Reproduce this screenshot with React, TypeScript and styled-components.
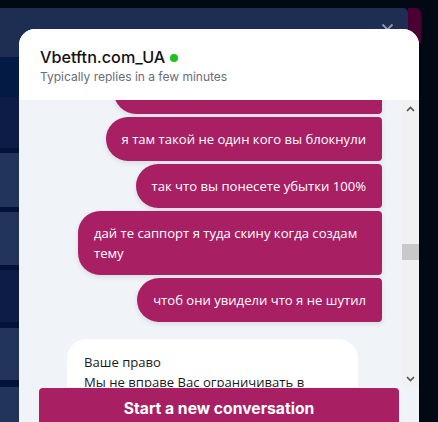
import React, { useEffect, useRef } from "react";
import styled, { createGlobalStyle } from "styled-components";

const Global = createGlobalStyle`
  html, body { margin: 0; padding: 0; background: #020814; }
  * { box-sizing: border-box; }
`;

const Scene = styled.div`
  position: relative;
  width: 438px;
  height: 422px;
  overflow: hidden;
  background: #020814;
`;

const Site = styled.div`
  display: flex;
  align-items: flex-start;
  padding-top: 8px;
  height: 100%;
`;

const SitePanel = styled.div`
  width: 408px;
  display: flex;
  flex-direction: column;
`;

const SiteHeader = styled.div`
  height: 49px;
  background: #1d2e52;
  border-radius: 0 5px 0 0;
  display: flex;
  justify-content: flex-end;
  align-items: flex-start;
  padding: 15px 14px 0 0;
  color: #8c9ab3;
`;

const tones: Record<string, string> = {
  deep: "#031a45",
  mid: "#0c1c46",
  light: "#22345a",
  sep: "#021238",
};

const SiteRow = styled.div<{ $h: number; $tone: string }>`
  height: ${(p) => p.$h}px;
  flex: none;
  background: ${(p) => tones[p.$tone]};
`;

const SideTab = styled.div`
  width: 13px;
  height: 35px;
  background: #4a0031;
  border-radius: 0 5px 0 0;
`;

const Widget = styled.div`
  position: absolute;
  left: 19px;
  top: 29px;
  width: 400px;
  height: 420px;
  background: #f0f4f8;
  border-radius: 16px 16px 0 0;
  overflow: hidden;
  display: flex;
  flex-direction: column;
  font-family: "Open Sans", "Noto Sans", sans-serif;
`;

const Header = styled.div`
  height: 71px;
  flex: none;
  background: #ffffff;
  padding: 18px 21px 0 21px;
  display: flex;
  flex-direction: column;
`;

const TitleRow = styled.div`
  display: flex;
  align-items: center;
  gap: 5px;
`;

const Title = styled.span`
  font-family: Inter, "Noto Sans", sans-serif;
  font-size: 16.2px;
  font-weight: 500;
  color: #121212;
  line-height: 21px;
`;

const OnlineDot = styled.span`
  width: 8px;
  height: 8px;
  border-radius: 50%;
  background: #1dc120;
  margin-top: 1px;
`;

const Subtitle = styled.span`
  font-family: Inter, "Noto Sans", sans-serif;
  font-size: 12px;
  color: #6a6b7a;
  line-height: 16px;
  margin-top: 1px;
`;

const ChatRow = styled.div`
  display: flex;
  height: 287px;
  flex: none;
`;

const MessageList = styled.div`
  position: relative;
  flex: 1;
  overflow: hidden;
  display: flex;
  flex-direction: column;
  align-items: flex-end;
  padding: 16px 20px 24px 48px;
`;

const Bubble = styled.div<{ $gap?: number }>`
  flex: none;
  background: #a91f64;
  color: #ffffff;
  font-size: 13.1px;
  line-height: 20px;
  padding: 12px 16px;
  border-radius: 22px 4px 4px 22px;
  max-width: 304px;
  min-height: 44px;
  margin-top: ${(p) => p.$gap ?? 3}px;
  box-shadow: 0 2px 5px rgba(30, 40, 60, 0.12);
`;

const OperatorCard = styled.div`
  flex: none;
  align-self: flex-start;
  width: 291px;
  margin-top: 17px;
  background: #ffffff;
  color: #1a1a1a;
  font-size: 13.1px;
  line-height: 20px;
  padding: 13px 17px;
  border-radius: 20px;
`;

const Line = styled.div``;

const Scrollbar = styled.div`
  width: 17px;
  flex: none;
  background: #f1f1f1;
  display: flex;
  flex-direction: column;
  align-items: center;
  color: #505050;
`;

const ScrollArrow = styled.div`
  height: 17px;
  display: flex;
  align-items: center;
  justify-content: center;
`;

const Track = styled.div`
  flex: 1;
  width: 100%;
  display: flex;
  flex-direction: column;
`;

const Thumb = styled.div`
  width: 100%;
  height: 16px;
  margin-top: 127px;
  background: #c9c9c9;
`;

const Footer = styled.div`
  padding: 1px 20px 0 20px;
`;

const StartButton = styled.button`
  width: 100%;
  height: 40px;
  border: none;
  border-radius: 4px 4px 0 0;
  background: #a91f64;
  color: #ffffff;
  font-family: Inter, "Noto Sans", sans-serif;
  font-size: 15.7px;
  font-weight: 700;
  cursor: pointer;
`;

const Chevron = ({ up }: { up?: boolean }) => (
  <svg width="9" height="6" viewBox="0 0 9 6">
    <path
      d={up ? "M1 5 L4.5 1.5 L8 5" : "M1 1 L4.5 4.5 L8 1"}
      fill="none"
      stroke="currentColor"
      strokeWidth="1.6"
    />
  </svg>
);

const CloseIcon = () => (
  <svg width="13" height="13" viewBox="0 0 13 13">
    <path d="M1.5 1.5 L11.5 11.5 M11.5 1.5 L1.5 11.5" stroke="currentColor" strokeWidth="1.8" fill="none" />
  </svg>
);

const rows: [number, string][] = [
  [40, "deep"],
  [51, "mid"],
  [5, "sep"],
  [54, "light"],
  [5, "sep"],
  [53, "light"],
  [5, "sep"],
  [52, "mid"],
  [6, "sep"],
  [52, "light"],
  [7, "sep"],
  [40, "light"],
];

const messages = [
  "я там такой не один кого вы блокнули",
  "так что вы понесете убытки 100%",
  "дай те саппорт я туда скину когда создам тему",
  "чтоб они увидели что я не шутил",
];

export default function App() {
  const listRef = useRef<HTMLDivElement>(null);
  const anchorRef = useRef<HTMLDivElement>(null);

  useEffect(() => {
    if (listRef.current && anchorRef.current) {
      listRef.current.scrollTop = anchorRef.current.offsetTop - 17;
    }
  }, []);

  return (
    <>
      <Global />
      <Scene>
        <Site>
          <SitePanel>
            <SiteHeader>
              <CloseIcon />
            </SiteHeader>
            {rows.map(([h, tone], i) => (
              <SiteRow key={i} $h={h} $tone={tone} />
            ))}
          </SitePanel>
          <SideTab />
        </Site>
        <Widget>
          <Header>
            <TitleRow>
              <Title>Vbetftn.com_UA</Title>
              <OnlineDot />
            </TitleRow>
            <Subtitle>Typically replies in a few minutes</Subtitle>
          </Header>
          <ChatRow>
            <MessageList ref={listRef}>
              <Bubble $gap={0} style={{ width: 268 }} />
              {messages.map((m, i) => (
                <Bubble key={i} ref={i === 0 ? anchorRef : undefined}>
                  {m}
                </Bubble>
              ))}
              <OperatorCard>
                <Line>Ваше право</Line>
                <Line>Мы не вправе Вас ограничивать в</Line>
              </OperatorCard>
            </MessageList>
            <Scrollbar>
              <ScrollArrow>
                <Chevron up />
              </ScrollArrow>
              <Track>
                <Thumb />
              </Track>
              <ScrollArrow>
                <Chevron />
              </ScrollArrow>
            </Scrollbar>
          </ChatRow>
          <Footer>
            <StartButton>Start a new conversation</StartButton>
          </Footer>
        </Widget>
      </Scene>
    </>
  );
}
